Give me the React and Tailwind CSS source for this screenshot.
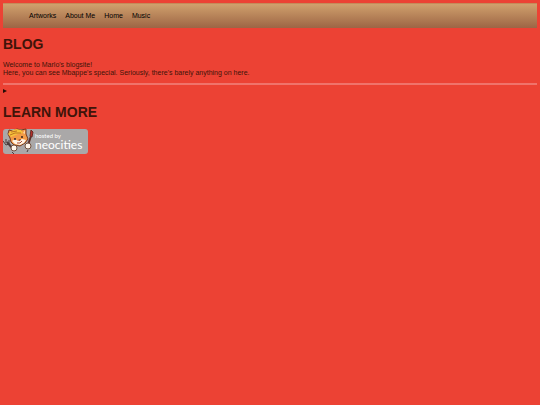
const links = ["Artworks", "About Me", "Home", "Music"];

function NeocitiesBadge() {
  return (
    <a href="#neocities" aria-label="Hosted by Neocities" className="block w-[85px]">
      <svg viewBox="0 0 85 26" className="block h-[26px] w-[85px]">
        <rect x="0" y="1" width="85" height="25" rx="3" fill="#aaa8a8" />
        <path d="M7 10 5 6 6 2 10 3 14 1 18 2 23 1 23 6 25 11 22 15 17 18 11 17 8 14Z" fill="#f39b46" stroke="#743b22" strokeWidth="1" />
        <path d="M5 6 8 3 13 1 18 2 20 5 15 6 8 9Z" fill="#f5c23b" />
        <path d="M7 7 12 5 18 5M8 4 14 3" fill="none" stroke="#bd7422" strokeWidth="1" />
        <path d="m20 5 2-3v4Z" fill="#ffd2a0" />
        <path d="M9 13 12 11 15 13 19 11 23 12 21 15 17 17 12 16Z" fill="#fff4e5" />
        <ellipse cx="12" cy="11" rx="1" ry="1" fill="#302020" />
        <ellipse cx="19" cy="9" rx="1" ry="1" fill="#302020" />
        <path d="m15 12 3-1-1 2Z" fill="#703126" />
        <path d="m14 15 3 0 2-2" fill="none" stroke="#a44931" strokeWidth="1" />
        <path d="m25 17 3-9" stroke="#5a302a" strokeWidth="2" />
        <path d="M27 8 28 2 30 4 29 9Z" fill="#b92e29" stroke="#672c27" strokeWidth="1" />
        <path d="m4 14 6 7" stroke="#4b3d3d" strokeWidth="2" />
        <path d="m0 13 3 4 3-1 0-4M3 11v4" fill="none" stroke="#4b3d3d" strokeWidth="1" />
        <ellipse cx="11" cy="20" rx="3" ry="3" fill="#fff6ea" stroke="#70503e" strokeWidth="1" />
        <ellipse cx="25" cy="18" rx="3" ry="3" fill="#fff6ea" stroke="#70503e" strokeWidth="1" />
        <path d="m9 24 2 2M25 22l-1 2" stroke="#4b3d3d" strokeWidth="1" />
        <text x="32" y="10" fill="#fff" fontSize="6" fontFamily="Lato, sans-serif">hosted by</text>
        <text x="32" y="21" fill="#fff" fontSize="12" fontFamily="Lato, sans-serif">neocities</text>
      </svg>
    </a>
  );
}

export default function App() {
  return (
    <div className="min-h-screen bg-[#ec4234] p-[3px] font-['Liberation_Sans',Arial,sans-serif] text-[7px] leading-[8px] text-[#401409]">
      <nav className="flex h-[25px] items-center border-t border-[#c58b59] bg-linear-to-b from-[#d0a16d] to-[#9d6545] pl-[26px] text-black">
        <ul className="flex gap-[9px]">
          {links.map((link) => (
            <li key={link}><a href={`#${link}`}>{link}</a></li>
          ))}
        </ul>
      </nav>
      <main>
        <h1 className="mt-2 text-[14px] leading-4 font-bold">BLOG</h1>
        <p className="mt-[9px]">
          Welcome to Marlo's blogsite!<br />
          Here, you can see Mbappe's special. Seriously, there's barely anything on here.
        </p>
        <hr className="mt-[6px] border-t-2 border-[#f0736b]" />
        <details className="mt-[2px] h-2">
          <summary aria-label="More posts" className="flex h-2 list-none items-center">
            <svg viewBox="0 0 4 4" className="size-1"><path d="M0 0 4 2 0 4Z" fill="#250c06" /></svg>
          </summary>
        </details>
        <h2 className="mt-[9px] mb-[8px] text-[14px] leading-4 font-bold">LEARN MORE</h2>
        <NeocitiesBadge />
      </main>
    </div>
  );
}
